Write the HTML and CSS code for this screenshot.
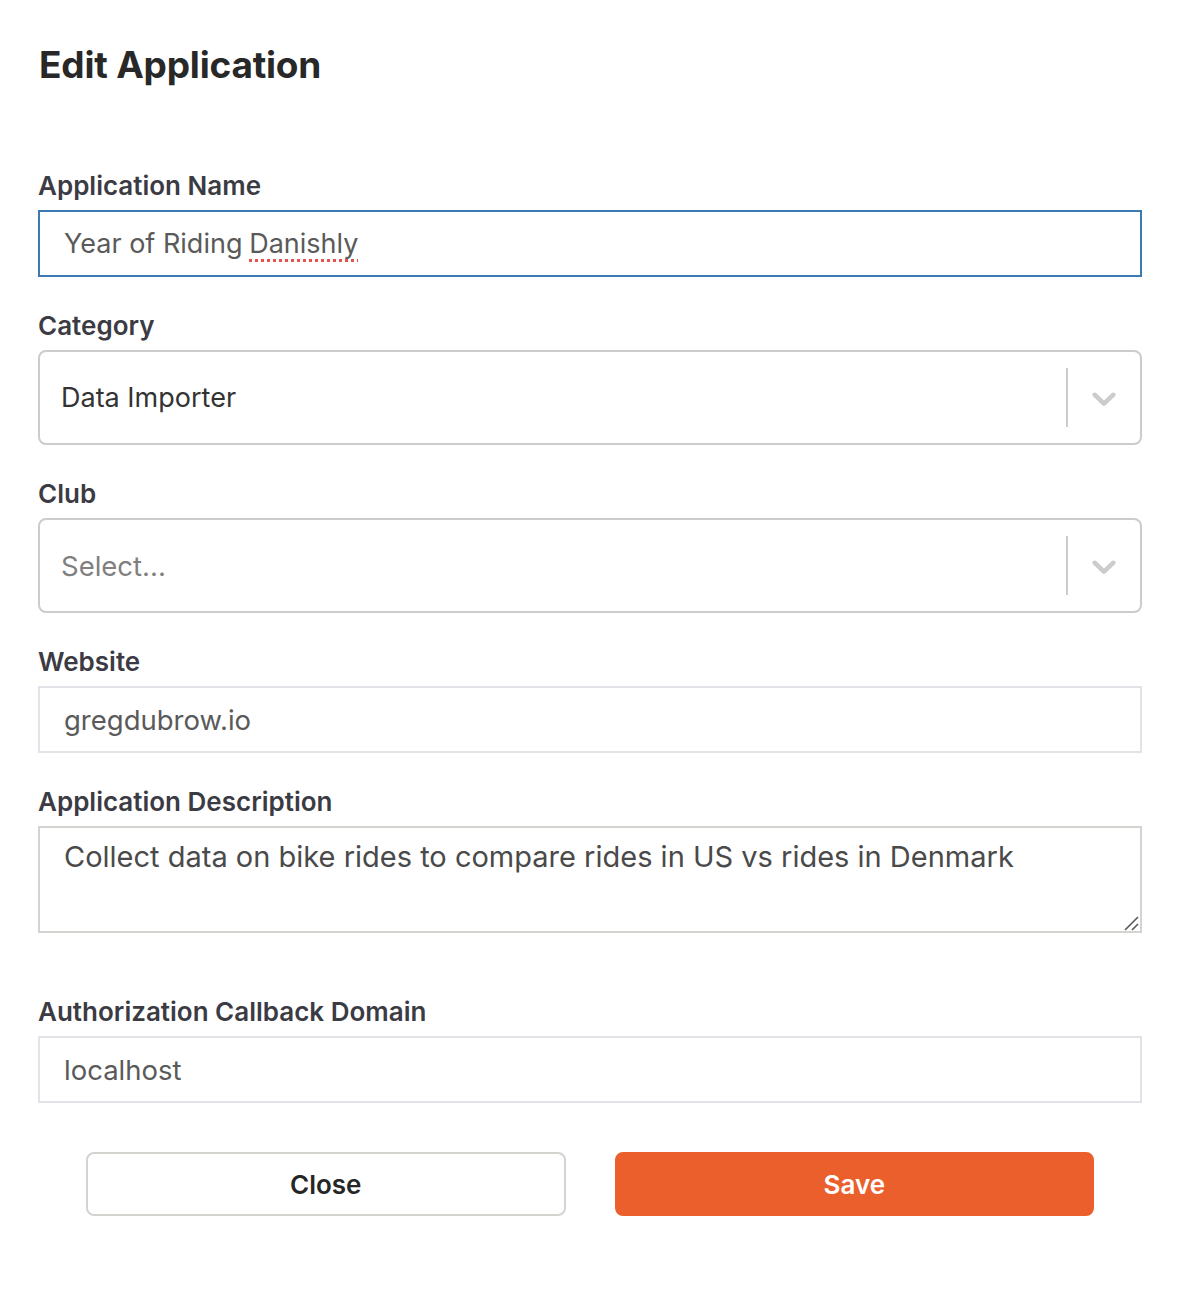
FILE: index.html
```html
<!DOCTYPE html>
<html lang="en">
<head>
<meta charset="utf-8">
<title>Edit Application</title>
<link rel="stylesheet" href="styles.css">
</head>
<body>
<div class="modal">
  <h1 class="title">Edit Application</h1>
  <form class="form">
    <div class="group">
      <label class="label">Application Name</label>
      <div class="text-field focused">Year of Riding <span class="misspelled">Danishly</span></div>
    </div>
    <div class="group">
      <label class="label">Category</label>
      <div class="select">
        <div class="select-value">Data Importer</div>
        <div class="select-indicators">
          <span class="select-separator"></span>
          <span class="select-chevron">
            <svg viewBox="0 0 20 20" width="40" height="40" aria-hidden="true"><path d="M4.516 7.548c0.436-0.446 1.043-0.481 1.576 0l3.908 3.747 3.908-3.747c0.533-0.481 1.141-0.446 1.574 0 0.436 0.445 0.408 1.197 0 1.615-0.406 0.418-4.695 4.502-4.695 4.502-0.217 0.223-0.502 0.335-0.787 0.335s-0.57-0.112-0.789-0.335c0 0-4.287-4.084-4.695-4.502s-0.436-1.17 0-1.615z"/></svg>
          </span>
        </div>
      </div>
    </div>
    <div class="group">
      <label class="label">Club</label>
      <div class="select">
        <div class="select-value placeholder">Select...</div>
        <div class="select-indicators">
          <span class="select-separator"></span>
          <span class="select-chevron">
            <svg viewBox="0 0 20 20" width="40" height="40" aria-hidden="true"><path d="M4.516 7.548c0.436-0.446 1.043-0.481 1.576 0l3.908 3.747 3.908-3.747c0.533-0.481 1.141-0.446 1.574 0 0.436 0.445 0.408 1.197 0 1.615-0.406 0.418-4.695 4.502-4.695 4.502-0.217 0.223-0.502 0.335-0.787 0.335s-0.57-0.112-0.789-0.335c0 0-4.287-4.084-4.695-4.502s-0.436-1.17 0-1.615z"/></svg>
          </span>
        </div>
      </div>
    </div>
    <div class="group">
      <label class="label">Website</label>
      <input class="text-input" type="text" value="gregdubrow.io">
    </div>
    <div class="group group-wide">
      <label class="label">Application Description</label>
      <div class="textarea-wrap">
        <textarea class="textarea">Collect data on bike rides to compare rides in US vs rides in Denmark</textarea>
        <svg class="resizer" viewBox="0 0 16 16" width="16" height="16" aria-hidden="true"><path d="M2 15 L15 2 M9 15 L15 9"/></svg>
      </div>
    </div>
    <div class="group">
      <label class="label">Authorization Callback Domain</label>
      <input class="text-input" type="text" value="localhost">
    </div>
    <div class="actions">
      <button type="button" class="btn btn-close">Close</button>
      <button type="button" class="btn btn-save">Save</button>
    </div>
  </form>
</div>
</body>
</html>
```
FILE: styles.css
```css
* { box-sizing: border-box; }
html, body { margin: 0; padding: 0; background: #ffffff; }
body { font-family: Inter, "Noto Sans", "Liberation Sans", sans-serif; }

.modal {
  width: 1188px;
  padding: 41px 46px 0 38px;
}

.title {
  margin: 0 0 81px 1px;
  font-size: 37px;
  line-height: 48px;
  font-weight: 700;
  color: #282828;
  letter-spacing: -0.2px;
}

.form { display: flex; flex-direction: column; }

.group { display: flex; flex-direction: column; margin-bottom: 33px; }
.group-wide { margin-bottom: 63px; }

.label {
  display: block;
  font-size: 26px;
  line-height: 32px;
  font-weight: 600;
  color: #3b3b43;
  margin: 0 0 8px 0;
}

.text-field, .text-input {
  height: 67px;
  width: 100%;
  border: 2px solid #e2e2e8;
  background: #fff;
  padding: 0 24px;
  font-family: inherit;
  font-size: 27.5px;
  color: #5a5a5a;
  display: flex;
  align-items: center;
  outline: none;
  margin: 0;
}
.text-field { font-size: 27px; }
.text-field.focused { border-color: #3b7bb1; }
.misspelled {
  margin-left: 0.25em;
  text-decoration: underline dotted #e5534b;
  text-decoration-thickness: 3px;
  text-underline-offset: 6px;
}

.select {
  height: 95px;
  border: 2px solid #cccccc;
  border-radius: 8px;
  display: flex;
  align-items: center;
  background: #fff;
}
.select-value {
  flex: 1;
  padding-left: 21px;
  font-size: 27px;
  color: #333333;
}
.select-value.placeholder { color: #808080; font-size: 27.5px; }
.select-indicators {
  display: flex;
  align-items: stretch;
  align-self: stretch;
}
.select-separator {
  width: 2px;
  background: #cccccc;
  margin: 16px 0;
}
.select-chevron {
  display: flex;
  align-items: center;
  padding: 0 16px;
}
.select-chevron svg { fill: #cccccc; display: block; }

.textarea-wrap { position: relative; }
.textarea {
  display: block;
  width: 100%;
  height: 107px;
  border: 2px solid #d3d3cf;
  padding: 12px 24px;
  font-family: inherit;
  font-size: 29px;
  line-height: 34px;
  color: #4a4a4a;
  resize: none;
  outline: none;
  margin: 0;
}
.resizer {
  position: absolute;
  right: 3px;
  bottom: 2px;
  fill: none;
  stroke: #5a5a5a;
  stroke-width: 1.6;
}

.actions {
  display: flex;
  gap: 49px;
  padding: 16px 48px 0 48px;
}
.btn {
  flex: 1;
  height: 64px;
  border-radius: 8px;
  font-family: inherit;
  font-size: 26px;
  font-weight: 600;
  cursor: pointer;
}
.btn-close {
  background: #fff;
  border: 2px solid #d3d3cf;
  color: #262626;
}
.btn-save {
  background: #ea5f2c;
  border: 2px solid #ea5f2c;
  color: #ffffff;
}
```
